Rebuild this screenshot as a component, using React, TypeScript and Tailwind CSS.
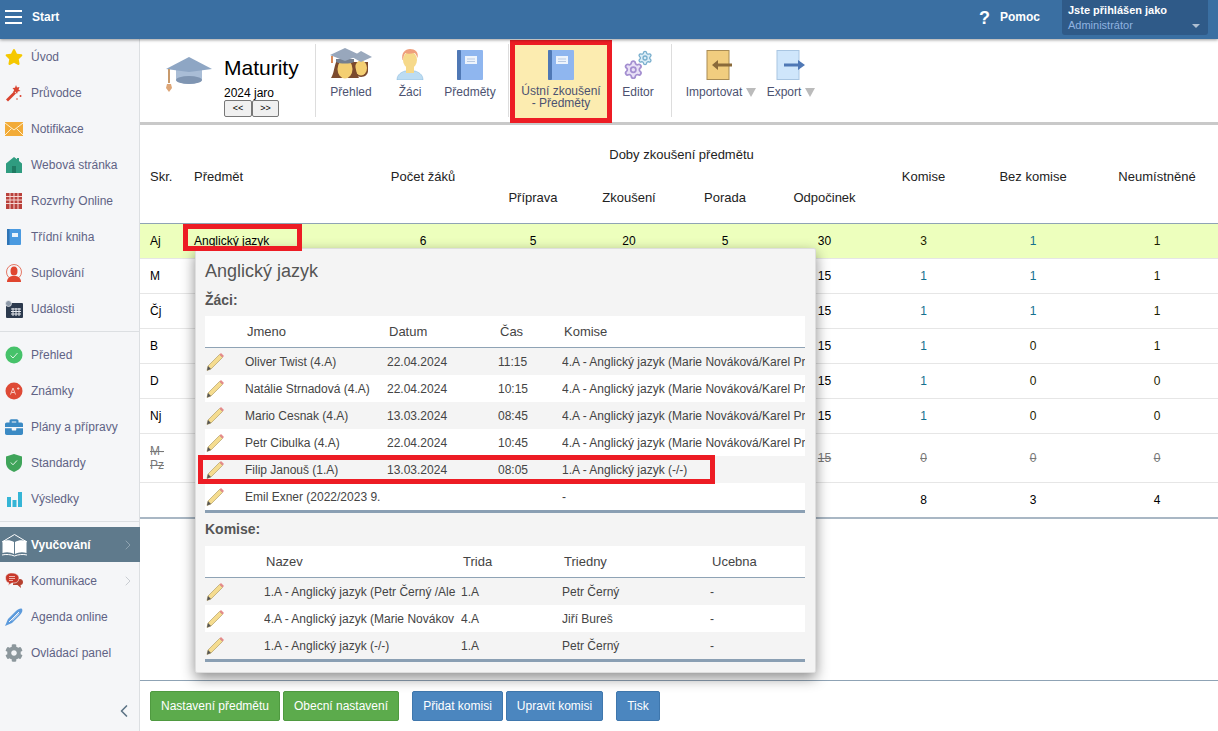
import { ChevronLeft, ChevronRight, Settings } from 'lucide-react';
import { FaBriefcase, FaCog, FaStar } from 'react-icons/fa';
import type { ReactNode } from 'react';

/* ---------- small drawn icons ---------- */

function Wand() {
  return (
    <svg viewBox="0 0 18 18" className="w-[18px] h-[18px]">
      <path d="M1 15.500 9 7.500l2 2-8 8z" fill="#d9432f" />
      <path d="M11 1l1 2.500 2.500-.5-1 2.500 2 1.500-2.700.5L12 10l-1.500-2.200-2.500.5 1.200-2.300L7.500 4l2.500-.2z" fill="#d9432f" />
      <circle cx="15.500" cy="12" r="1" fill="#d9432f" />
      <circle cx="12" cy="15" r="0.800" fill="#d9432f" />
    </svg>
  );
}

function Mail() {
  return (
    <svg viewBox="0 0 18 14" className="w-[18px] h-[14px]">
      <rect width="18" height="14" fill="#f2ab38" />
      <path d="M0 1l9 7 9-7M0 13l6.500-6.500M18 13l-6.500-6.500" stroke="#fdf0cf" strokeWidth="1" fill="none" />
    </svg>
  );
}

function House() {
  return (
    <svg viewBox="0 0 18 18" className="w-[18px] h-[18px]">
      <path d="M9 1 1 7.500V17h16V7.500L14 5V2h-2v1.300z" fill="#2f9c80" />
      <rect x="7" y="10" width="4" height="7" fill="#1f7a62" />
    </svg>
  );
}

function RedCalendar() {
  return (
    <svg viewBox="0 0 16 16" className="w-4 h-4">
      <rect width="16" height="16" fill="#b9413c" />
      <path d="M0 3.500h16M0 7h16M0 10.500h16M4 0v16M8 0v16M12 0v16" stroke="#f5d6d2" strokeWidth="1" />
    </svg>
  );
}

function SmallBook() {
  return (
    <svg viewBox="0 0 16 16" className="w-4 h-4">
      <rect x="1" width="14" height="16" rx="1" fill="#4a9ae0" />
      <rect x="1" width="2.500" height="16" fill="#2f74b5" />
      <rect x="6" y="4" width="6" height="4" fill="#eaf4fc" />
    </svg>
  );
}

function RedPerson() {
  return (
    <svg viewBox="0 0 18 18" className="w-[18px] h-[18px]">
      <circle cx="9" cy="8" r="7.500" fill="none" stroke="#e0573f" strokeWidth="0.800" />
      <ellipse cx="9" cy="7" rx="3.500" ry="4.500" fill="#e0452f" />
      <path d="M2 18c0-4 3-5.500 5-6h4c2 .5 5 2 5 6z" fill="#e0452f" />
    </svg>
  );
}

function DarkCalendar() {
  return (
    <svg viewBox="0 0 18 18" className="w-[18px] h-[18px]">
      <rect x="1" y="3" width="17" height="15" rx="1" fill="#2c3a4e" />
      <path d="M6 9h10M6 11.500h10M6 14h10M8 8v8M11 8v8M14 8v8" stroke="#e6e9ee" strokeWidth="1" />
      <circle cx="3.500" cy="3.500" r="3" fill="#8d99a8" stroke="#f5f6f8" strokeWidth="0.700" />
    </svg>
  );
}

function CheckCircle() {
  return (
    <svg viewBox="0 0 18 18" className="w-[18px] h-[18px]">
      <circle cx="9" cy="9" r="8.500" fill="#46c26a" />
      <path d="M5.500 9.500 8 12l4.500-5" stroke="#dff5e5" strokeWidth="1" fill="none" />
    </svg>
  );
}

function GradeCircle() {
  return (
    <svg viewBox="0 0 18 18" className="w-[18px] h-[18px]">
      <circle cx="9" cy="9" r="8.500" fill="#de4a36" />
      <path d="M5.500 12.500 8 6l2.500 6.500M6.500 10.500h3M12 6.500h2.500M13.200 5.200v2.600" stroke="#f8d8d2" strokeWidth="0.900" fill="none" />
    </svg>
  );
}

function Shield() {
  return (
    <svg viewBox="0 0 18 18" className="w-[18px] h-[18px]">
      <path d="M9 0 17 2.500V9c0 4.500-4 7.500-8 9-4-1.500-8-4.500-8-9V2.500z" fill="#3fa45a" />
      <path d="M5.800 8.500 8 10.800l4-4.300" stroke="#e2f4e6" strokeWidth="1" fill="none" />
    </svg>
  );
}

function Bars() {
  return (
    <svg viewBox="0 0 16 15" className="w-4 h-[15px]">
      <path d="M1 5h4v10H1zM6.500 8h4v7h-4zM12 0h4v15h-4z" fill="#35b5d6" />
    </svg>
  );
}

function OpenBook() {
  return (
    <svg viewBox="0 0 27 24" className="w-[27px] h-6">
      <path d="M1 9 13.500 1.500 26 9" fill="none" stroke="#fff" strokeWidth="1" />
      <path d="M1.500 8c4-1.500 8.500-1 11.500 1v12c-3-1.800-7.500-2.500-11.500-1zM25.500 8c-4-1.500-8.500-1-11.500 1v12c3-1.800 7.500-2.500 11.500-1z" fill="#fff" />
      <path d="M1 22c4-1 9-.5 12.500 1 3.500-1.500 8.500-2 12.500-1" fill="none" stroke="#fff" strokeWidth="1" />
    </svg>
  );
}

function Chat() {
  return (
    <svg viewBox="0 0 18 16" className="w-[18px] h-4">
      <path d="M8 6h7c1.500 0 3 1 3 3s-1 3-2.500 3l.5 3-3.500-3H8z" fill="#b5402f" />
      <path d="M6.500 0C2.800 0 .5 2 .5 5s1.800 4.500 3.500 5l-1 2.500L7 10h2c3 0 5-2 5-5s-3-5-7.500-5z" fill="#c8382a" stroke="#f5f6f8" strokeWidth="0.600" />
      <path d="M4 3.500h6M4 5.500h6M4 7.500h4" stroke="#f7d7d2" strokeWidth="0.800" />
    </svg>
  );
}

function Quill() {
  return (
    <svg viewBox="0 0 18 18" className="w-[18px] h-[18px]">
      <path d="M0 18 3 11 11 3c2-2 5-3 6-2s0 4-2 6l-8 8z" fill="#5d9bdc" />
      <path d="M4 14 14 4M7 12.500l7-7" stroke="#f5f6f8" strokeWidth="1" />
    </svg>
  );
}

function GradCap({ className, color = '#8ea6c4' }: { className: string; color?: string }) {
  return (
    <svg viewBox="0 0 48 36" className={className}>
      <path d="M11 13v11c4 5 22 5 26 0V13z" fill="#a9bdd6" />
      <ellipse cx="24" cy="24" rx="13" ry="4" fill="#7f95b2" />
      <path d="M24 1 47 13 24 16 1 13z" fill={color} />
      <path d="M4 13v14" stroke="#c89a6c" strokeWidth="2" />
      <path d="M2 28h4l1 4-3 4-3-4z" fill="#dda677" />
    </svg>
  );
}

function Students() {
  return (
    <svg viewBox="0 0 44 32" className="w-11 h-8">
      {/* back student */}
      <path d="M25 14h14v9c0 3-3 6-7 6s-7-3-7-6z" fill="#7b4a2e" />
      <ellipse cx="32" cy="20" rx="6" ry="7.500" fill="#f4cf72" />
      <path d="M32 3l11 6-11 5-9-5z" fill="#9aa9bd" />
      {/* front student */}
      <path d="M8 12C5 18 5 26 2 30h28c-3-4-3-12-6-18z" fill="#7b4a2e" />
      <ellipse cx="16" cy="21" rx="7.500" ry="9.500" fill="#f4cf72" />
      <path d="M7 11h18v3c-4 2-14 2-18 0z" fill="#76808f" />
      <path d="M16 0 31 7 16 13 1 7z" fill="#98a7bc" />
      <path d="M3 8v7" stroke="#d98a5a" strokeWidth="2" />
    </svg>
  );
}

function Pupil() {
  return (
    <svg viewBox="0 0 28 32" className="w-7 h-8">
      <path d="M1 32c0-6 5-8 8-9h10c3 1 8 3 8 9z" fill="#bcdcf2" stroke="#7fb2d8" strokeWidth="0.500" />
      <rect x="10" y="18" width="8" height="7" fill="#f6d98a" />
      <ellipse cx="14" cy="12" rx="7" ry="8.500" fill="#f6d98a" />
      <path d="M6.500 12C5 5 9 1 14 1s9 3 7.500 9c-1-3-2-5-3.500-5-3 1-7 1-8.500 0-1 1-2.500 4-2.500 7z" fill="#ef9f7c" />
    </svg>
  );
}

function BigBook() {
  return (
    <svg viewBox="0 0 26 30" className="w-[26px] h-[30px]">
      <rect width="26" height="30" rx="1" fill="#8fb6ef" />
      <rect width="4" height="30" rx="1" fill="#4f78b5" />
      <rect x="8" y="6" width="12" height="8" fill="#eef4fc" />
      <path d="M10 9h8M10 11.500h8" stroke="#b8c9e2" strokeWidth="1" />
    </svg>
  );
}

function Gears() {
  return (
    <svg viewBox="0 0 32 32" className="w-[30px] h-[30px]">
      <Settings x={0} y={10} width={22} height={22} color="#a48fd0" fill="#e8e0f6" strokeWidth={2} />
      <Settings x={15} y={0} width={17} height={17} color="#78aecd" fill="#dcedf7" strokeWidth={2} />
    </svg>
  );
}

function ImportIcon() {
  return (
    <svg viewBox="0 0 30 30" className="w-[30px] h-[30px]">
      <rect x="1" y="0.500" width="22" height="29" fill="#f1cd7f" stroke="#a98c55" />
      <path d="M26 13.500H12V10l-6 5 6 5v-3.500h14z" fill="#8a6a3a" />
    </svg>
  );
}

function ExportIcon() {
  return (
    <svg viewBox="0 0 30 30" className="w-[30px] h-[30px]">
      <rect x="1" y="0.500" width="22" height="29" fill="#cfe6fb" stroke="#a9c6e2" />
      <path d="M8 13.500h14V10l7 5-7 5v-3.500H8z" fill="#4f78b5" />
    </svg>
  );
}

function Pencil() {
  return (
    <svg viewBox="0 0 18 18" className="w-[18px] h-[18px]">
      <path d="M1 17.500l1-4.500L13.500 1.500 16.500 4.500 5 16z" fill="#f5dc8f" stroke="#a8945a" strokeWidth="0.600" />
      <path d="M13.500 1.500 15 0l3 3-1.500 1.500z" fill="#e58a8a" />
      <path d="M1 17.500l1-4.500 3 3z" fill="#555" />
    </svg>
  );
}

function Caret() {
  return <span className="inline-block ml-[4px] border-x-[5px] border-t-[9px] border-x-transparent border-t-[#bbb]" />;
}

/* ---------- sidebar ---------- */

type NavItem = { label: string; icon: ReactNode; chevron?: boolean };

const navTop: NavItem[] = [
  { label: 'Úvod', icon: <FaStar className="w-[18px] h-[18px] text-[#f5c800]" /> },
  { label: 'Průvodce', icon: <Wand /> },
  { label: 'Notifikace', icon: <Mail /> },
  { label: 'Webová stránka', icon: <House /> },
  { label: 'Rozvrhy Online', icon: <RedCalendar /> },
  { label: 'Třídní kniha', icon: <SmallBook /> },
  { label: 'Suplování', icon: <RedPerson /> },
  { label: 'Události', icon: <DarkCalendar /> },
];

const navMid: NavItem[] = [
  { label: 'Přehled', icon: <CheckCircle /> },
  { label: 'Známky', icon: <GradeCircle /> },
  { label: 'Plány a přípravy', icon: <FaBriefcase className="w-[18px] h-[18px] text-[#3b8ac4]" /> },
  { label: 'Standardy', icon: <Shield /> },
  { label: 'Výsledky', icon: <Bars /> },
];

const navBottom: NavItem[] = [
  { label: 'Komunikace', icon: <Chat />, chevron: true },
  { label: 'Agenda online', icon: <Quill /> },
  { label: 'Ovládací panel', icon: <FaCog className="w-[18px] h-[18px] text-[#8c979c]" /> },
];

function NavRow({ item }: { item: NavItem }) {
  return (
    <div className="flex items-center h-9 pl-[5px] text-xs text-[#5f6385]">
      <span className="w-[18px] flex justify-center shrink-0">{item.icon}</span>
      <span className="ml-2 flex-1">{item.label}</span>
      {item.chevron && <ChevronRight className="w-4 h-4 mr-[3px] text-[#c9cdd2]" strokeWidth={1.5} />}
    </div>
  );
}

function Sidebar() {
  return (
    <aside className="w-[140px] shrink-0 bg-[#f5f6f8] border-r border-[#dcdfe2] flex flex-col">
      {navTop.map((n) => (
        <NavRow key={n.label} item={n} />
      ))}
      <div className="border-t border-[#dcdfe2] mt-[4px] mb-[5px]" />
      {navMid.map((n) => (
        <NavRow key={n.label} item={n} />
      ))}
      <div className="border-t border-[#dcdfe2] mt-[4px] mb-[5px]" />
      <div className="flex items-center h-[35px] -mr-px bg-[#5f7a8c] text-xs font-bold text-white">
        <span className="w-[27px] ml-[1px] flex justify-center shrink-0">
          <OpenBook />
        </span>
        <span className="ml-[3px] flex-1">Vyučování</span>
        <ChevronRight className="w-4 h-4 mr-[4px] text-[#8fa3b0]" strokeWidth={1.5} />
      </div>
      <div className="pt-[1px]">
        {navBottom.map((n) => (
          <NavRow key={n.label} item={n} />
        ))}
      </div>
      <div className="mt-auto mb-[10px] mr-[5px] flex justify-end">
        <ChevronLeft className="w-5 h-5 text-[#5d7486]" strokeWidth={2} />
      </div>
    </aside>
  );
}

/* ---------- toolbar ---------- */

function ToolItem({ w, icon, label }: { w: string; icon: ReactNode; label: ReactNode }) {
  return (
    <div className={`${w} flex flex-col items-center pt-[9px] text-xs text-[#4c5270]`}>
      <div className="h-[32px] flex items-end justify-center">{icon}</div>
      <div className="mt-[4px] text-center whitespace-nowrap flex items-center">{label}</div>
    </div>
  );
}

function Toolbar() {
  return (
    <div className="h-[86px] shrink-0 flex bg-white border-b-[3px] border-[#c9c9c9]">
      <div className="w-[175px] shrink-0 flex pl-[25px] pt-[16px]">
        <GradCap className="w-12 h-9 mt-[1px]" />
        <div className="ml-[11px] text-black">
          <div className="text-[21px] leading-[26px]">Maturity</div>
          <div className="text-xs leading-[14px] mt-[5px]">2024 jaro</div>
          <div className="flex">
            <button className="w-[28px] h-[17px] bg-[#f0f0f0] border border-[#777] rounded-[2px] text-[9px] leading-none">&lt;&lt;</button>
            <button className="w-[27px] h-[17px] bg-[#f0f0f0] border border-[#777] rounded-[2px] text-[9px] leading-none">&gt;&gt;</button>
          </div>
        </div>
      </div>
      <div className="w-px bg-[#ddd] my-[5px]" />
      <ToolItem w="w-[70px]" icon={<Students />} label="Přehled" />
      <ToolItem w="w-[48px]" icon={<Pupil />} label="Žáci" />
      <ToolItem w="w-[72px]" icon={<BigBook />} label="Předměty" />
      <div className="w-px ml-[2px] bg-[#ddd] my-[5px]" />
      <div className="w-[102px] h-[83px] mt-[1px] ml-[1px] shrink-0 flex flex-col items-center border-[5px] border-[#ed1c24] bg-[#fcecb0] pt-[5px] text-xs leading-[12px] text-[#4c5270]">
        <BigBook />
        <div className="mt-[5px] text-center whitespace-nowrap">
          <div>Ústní zkoušení</div>
          <div>- Předměty</div>
        </div>
      </div>
      <ToolItem w="w-[52px]" icon={<Gears />} label="Editor" />
      <div className="w-[7px]" />
      <div className="w-px bg-[#ddd] my-[5px]" />
      <div className="w-[7px]" />
      <ToolItem
        w="w-[84px]"
        icon={<ImportIcon />}
        label={
          <>
            Importovat
            <Caret />
          </>
        }
      />
      <ToolItem
        w="w-[56px]"
        icon={<ExportIcon />}
        label={
          <>
            Export
            <Caret />
          </>
        }
      />
    </div>
  );
}

/* ---------- main table ---------- */

const teal = 'text-[#14708f]';
const dark = 'text-[#1c1c00]';

type Row = {
  skr: ReactNode;
  odp: string;
  k: [string, string];
  b: [string, string];
  n: [string, string];
};

const rows: Row[] = [
  { skr: 'M', odp: '15', k: ['1', teal], b: ['1', teal], n: ['1', dark] },
  { skr: 'Čj', odp: '15', k: ['1', teal], b: ['1', teal], n: ['1', dark] },
  { skr: 'B', odp: '15', k: ['1', teal], b: ['0', dark], n: ['1', dark] },
  { skr: 'D', odp: '15', k: ['1', teal], b: ['0', dark], n: ['0', dark] },
  { skr: 'Nj', odp: '15', k: ['1', teal], b: ['0', dark], n: ['0', dark] },
];

function MainTable() {
  return (
    <table className="w-full table-fixed border-collapse text-xs text-black">
      <colgroup>
        <col className="w-[44px]" />
        <col className="w-[176px]" />
        <col className="w-[126px]" />
        <col className="w-[94px]" />
        <col className="w-[98px]" />
        <col className="w-[94px]" />
        <col className="w-[105px]" />
        <col className="w-[93px]" />
        <col className="w-[126px]" />
        <col className="w-[122px]" />
      </colgroup>
      <thead className="text-[13px] font-normal text-[#222]">
        <tr className="h-[58px]">
          <th rowSpan={2} className="font-normal text-left pl-[10px] pt-[6px]">Skr.</th>
          <th rowSpan={2} className="font-normal text-left pl-[10px] pt-[6px]">Předmět</th>
          <th rowSpan={2} className="font-normal pt-[6px]">Počet žáků</th>
          <th colSpan={4} className="font-normal pt-[2px]">Doby zkoušení předmětu</th>
          <th rowSpan={2} className="font-normal pt-[6px]">Komise</th>
          <th rowSpan={2} className="font-normal pt-[6px]">Bez komise</th>
          <th rowSpan={2} className="font-normal pt-[6px]">Neumístněné</th>
        </tr>
        <tr className="h-[40px] border-b border-[#8fa3b5]">
          <th className="font-normal pb-[10px]">Příprava</th>
          <th className="font-normal pb-[10px]">Zkoušení</th>
          <th className="font-normal pb-[10px]">Porada</th>
          <th className="font-normal pb-[10px]">Odpočinek</th>
        </tr>
      </thead>
      <tbody className="text-center">
        <tr className="h-[35px] bg-[#edffbd] border-b border-[#e6e6e6]">
          <td className="text-left pl-[10px]">Aj</td>
          <td className="text-left pl-[10px]">Anglický jazyk</td>
          <td>6</td>
          <td>5</td>
          <td>20</td>
          <td>5</td>
          <td>30</td>
          <td className={dark}>3</td>
          <td className={teal}>1</td>
          <td className={dark}>1</td>
        </tr>
        {rows.map((r) => (
          <tr key={r.odp + String(r.skr)} className="h-[35px] border-b border-[#e6e6e6]">
            <td className="text-left pl-[10px]">{r.skr}</td>
            <td />
            <td />
            <td />
            <td />
            <td />
            <td>{r.odp}</td>
            <td className={r.k[1]}>{r.k[0]}</td>
            <td className={r.b[1]}>{r.b[0]}</td>
            <td className={r.n[1]}>{r.n[0]}</td>
          </tr>
        ))}
        <tr className="h-[49px] border-b border-[#e6e6e6] text-[#777] line-through">
          <td className="text-left pl-[10px] leading-[14px]">
            M-
            <br />
            Pz
          </td>
          <td />
          <td />
          <td />
          <td />
          <td />
          <td>15</td>
          <td>0</td>
          <td>0</td>
          <td>0</td>
        </tr>
        <tr className="h-[36px] border-b-2 border-[#a9b7c4]">
          <td />
          <td />
          <td />
          <td />
          <td />
          <td />
          <td />
          <td>8</td>
          <td>3</td>
          <td>4</td>
        </tr>
      </tbody>
    </table>
  );
}

/* ---------- popup ---------- */

const pupils = [
  ['Oliver Twist (4.A)', '22.04.2024', '11:15', '4.A - Anglický jazyk (Marie Nováková/Karel Pr'],
  ['Natálie Strnadová (4.A)', '22.04.2024', '10:15', '4.A - Anglický jazyk (Marie Nováková/Karel Pr'],
  ['Mario Cesnak (4.A)', '13.03.2024', '08:45', '4.A - Anglický jazyk (Marie Nováková/Karel Pr'],
  ['Petr Cibulka (4.A)', '22.04.2024', '10:45', '4.A - Anglický jazyk (Marie Nováková/Karel Pr'],
  ['Filip Janouš (1.A)', '13.03.2024', '08:05', '1.A - Anglický jazyk (-/-)'],
  ['Emil Exner (2022/2023 9.', '', '', '-'],
];

const boards = [
  ['1.A - Anglický jazyk (Petr Černý /Ale', '1.A', 'Petr Černý', '-'],
  ['4.A - Anglický jazyk (Marie Novákov', '4.A', 'Jiří Bureš', '-'],
  ['1.A - Anglický jazyk (-/-)', '1.A', 'Petr Černý', '-'],
];

function GridTable({ cols, head, data }: { cols: string; head: string[]; data: string[][] }) {
  return (
    <div className="border-b-[3px] border-[#8a9fb3] text-[#444]">
      <div className={`grid ${cols} h-[32px] items-center bg-white border-b border-[#8fa3b5] text-[13px]`}>
        <span />
        {head.map((h) => (
          <span key={h} className="pl-[2px]">{h}</span>
        ))}
      </div>
      {data.map((row, i) => (
        <div key={row[0]} className={`grid ${cols} h-[27px] items-center text-xs ${i % 2 ? 'bg-white' : 'bg-[#f4f4f4]'}`}>
          <span className="pl-[1px] flex items-center">
            <Pencil />
          </span>
          {row.map((c, j) => (
            <span key={j} className="overflow-hidden whitespace-nowrap">{c}</span>
          ))}
        </div>
      ))}
    </div>
  );
}

function Popup() {
  return (
    <div className="absolute left-[55px] top-[209px] w-[621px] h-[425px] bg-[#f4f4f4] border border-[#dedede] rounded-[2px] shadow-[0_5px_14px_rgba(0,0,0,0.45)] pl-[9px] pr-[10px] pt-[10px]">
      <h2 className="text-lg leading-[24px] text-[#555]">Anglický jazyk</h2>
      <h3 className="text-sm font-bold leading-[18px] mt-[8px] text-[#555]">Žáci:</h3>
      <div className="mt-[7px]">
        <GridTable cols="grid-cols-[40px_142px_111px_64px_243px]" head={['Jmeno', 'Datum', 'Čas', 'Komise']} data={pupils} />
      </div>
      <h3 className="text-sm font-bold leading-[18px] mt-[7px] text-[#555]">Komise:</h3>
      <div className="mt-[8px]">
        <GridTable cols="grid-cols-[59px_197px_101px_148px_95px]" head={['Nazev', 'Trida', 'Triedny', 'Ucebna']} data={boards} />
      </div>
    </div>
  );
}

/* ---------- page ---------- */

function Btn({ color, className, children }: { color: 'green' | 'blue'; className: string; children: string }) {
  const c = color === 'green' ? 'bg-[#5cab4c] border-[#4f9a40]' : 'bg-[#4b86bf] border-[#3f77ad]';
  return (
    <button className={`h-[30px] rounded-[2px] border text-xs text-white ${c} ${className}`}>{children}</button>
  );
}

export default function App() {
  return (
    <div className="w-[1218px] h-[731px] overflow-hidden flex flex-col bg-white font-['Liberation_Sans',Arial,sans-serif]">
      {/* top bar */}
      <header className="h-[39px] shrink-0 bg-[#3a6fa2] flex items-center text-white shadow-[0_1px_3px_rgba(0,0,0,0.4)] z-10">
        <div className="ml-[5px] mb-[6px] w-[17px] flex flex-col gap-[4px]">
          <span className="h-[2px] bg-white" />
          <span className="h-[2px] bg-white" />
          <span className="h-[2px] bg-white" />
        </div>
        <span className="ml-[10px] text-xs font-bold mb-[6px]">Start</span>
        <div className="ml-auto flex items-center h-full">
          <span className="text-lg font-bold mr-[10px] mb-[3px]">?</span>
          <span className="text-xs font-bold mr-[22px] mb-[6px]">Pomoc</span>
          <div className="relative w-[146px] h-[35px] mb-[4px] mr-[10px] bg-[#2f5a88] rounded-b-[3px] pl-[6px] pt-[4px]">
            <div className="text-[11px] font-bold leading-[13px]">Jste přihlášen jako</div>
            <div className="text-[11px] leading-[13px] mt-[2px] text-[#8fb3e0]">Administrátor</div>
            <span className="absolute right-[8px] bottom-[7px] border-x-[4px] border-t-[4px] border-x-transparent border-t-[#aebfd2]" />
          </div>
        </div>
      </header>

      <div className="flex flex-1 min-h-0">
        <Sidebar />
        <main className="relative flex-1 flex flex-col min-w-0">
          <Toolbar />
          <MainTable />
          <div className="mt-auto h-[51px] shrink-0 border-t border-[#8fa3b5] flex items-start pt-[10px] pl-[10px]">
            <Btn color="green" className="w-[130px]">Nastavení předmětu</Btn>
            <Btn color="green" className="w-[116px] ml-[3px]">Obecní nastavení</Btn>
            <Btn color="blue" className="w-[91px] ml-[13px]">Přidat komisi</Btn>
            <Btn color="blue" className="w-[97px] ml-[3px]">Upravit komisi</Btn>
            <Btn color="blue" className="w-[44px] ml-[13px]">Tisk</Btn>
          </div>
          <Popup />
          {/* red callouts drawn over the screenshot */}
          <div className="absolute left-[43px] top-[185px] w-[119px] h-[27px] border-[5px] border-[#ed1c24] pointer-events-none" />
          <div className="absolute left-[58px] top-[416px] w-[517px] h-[29px] border-[5px] border-[#ed1c24] pointer-events-none" />
        </main>
      </div>
    </div>
  );
}
